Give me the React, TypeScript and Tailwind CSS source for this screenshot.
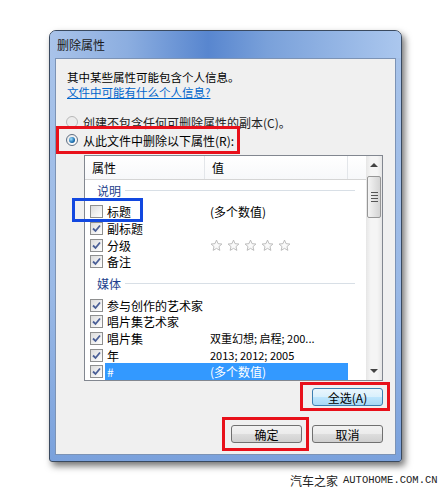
const font = { fontFamily: '"Noto Sans CJK SC", "Noto Sans", sans-serif' };

const Check = ({ on }: { on: boolean }) => (
  <span className="flex h-[13px] w-[13px] shrink-0 items-center justify-center border border-[#8e8f8f] bg-[linear-gradient(135deg,#dcdcdc,#ffffff)]">
    {on && (
      <svg width="9" height="9" viewBox="0 0 9 9">
        <path d="M1 4.5 L3.5 7 L8 1.5" stroke="#4a5f97" strokeWidth="1.8" fill="none" />
      </svg>
    )}
  </span>
);

const Star = () => (
  <svg width="13" height="13" viewBox="0 0 24 24">
    <path
      d="M12 2 L14.9 8.6 L22 9.3 L16.6 14 L18.2 21 L12 17.3 L5.8 21 L7.4 14 L2 9.3 L9.1 8.6 Z"
      fill="#fafafa"
      stroke="#b4b4b4"
      strokeWidth="1.6"
    />
  </svg>
);

const Group = ({ label, className }: { label: string; className: string }) => (
  <div className={`flex h-[22px] items-center pl-[12px] pr-[11px] ${className}`}>
    <span className="text-[#1e3f8c]">{label}</span>
    <span className="ml-[4px] h-px flex-1 bg-[#d8dfe6]" />
  </div>
);

const Row = ({
  name,
  value,
  on = true,
  selected = false,
  stars = false,
  small = false,
}: {
  name: string;
  value?: string;
  on?: boolean;
  selected?: boolean;
  stars?: boolean;
  small?: boolean;
}) => (
  <div className="flex h-[17px] items-center">
    <div className="flex w-[20px] justify-end pr-[2px]">
      <Check on={on} />
    </div>
    <div
      className={`flex h-full w-[243px] items-center ${selected ? "bg-[#3399ff] text-white" : "text-black"}`}
    >
      <span className="w-[105px] pl-[2px]">{name}</span>
      {stars ? (
        <span className="flex gap-[4px]">
          <Star />
          <Star />
          <Star />
          <Star />
          <Star />
        </span>
      ) : (
        <span className={small ? "text-[11px]" : ""}>{value}</span>
      )}
    </div>
  </div>
);

const Radio = ({ on }: { on: boolean }) => (
  <span
    className={`flex h-[12px] w-[12px] items-center justify-center rounded-full border ${on ? "border-[#5e6e82] bg-[linear-gradient(135deg,#e8e8e8,#ffffff)]" : "border-[#b8b8b8] bg-[#ececec]"}`}
  >
    {on && <span className="h-[6px] w-[6px] rounded-full bg-[radial-gradient(circle_at_35%_35%,#9fe0ff,#1c6fb0_60%,#0b3f6e)]" />}
  </span>
);

const Button = ({ label, focus = false }: { label: string; focus?: boolean }) => (
  <div
    className={`flex h-[18px] w-[71px] items-center justify-center rounded-[3px] border text-[12px] text-black ${
      focus
        ? "border-[#3c7fb1] bg-[linear-gradient(180deg,#eaf6fd_0%,#d9f0fc_50%,#bee6fd_51%,#a7d9f5_100%)]"
        : "border-[#707070] bg-[linear-gradient(180deg,#f2f2f2_0%,#ebebeb_50%,#dddddd_51%,#cfcfcf_100%)]"
    }`}
  >
    {label}
  </div>
);

export default function App() {
  return (
    <div className="relative h-[488px] w-[443px] overflow-hidden bg-white text-[12px] leading-[15px]" style={font}>
      <div className="pl-[49px] pt-[30px]">
        {/* window */}
        <div className="flex h-[432px] w-[353px] flex-col rounded-t-[7px] rounded-b-[3px] border border-[#3a4a60] bg-[linear-gradient(180deg,#a9c4ea_0%,#9ab9e6_60%,#7aa1dc_100%)] shadow-[3px_4px_7px_rgba(0,0,0,0.55)]">
          <div className="flex h-[27px] items-center rounded-t-[6px] bg-[linear-gradient(90deg,#a9c3e9_0%,#8caee0_22%,#5886cf_45%,#7aa1da_62%,#abc7ee_100%)] pl-[7px] text-[#1a1a1a]">
            删除属性
          </div>

          {/* client area */}
          <div className="mx-[5px] flex h-[397px] flex-col border border-[#7c93b5] bg-[#f0f0f0] pt-[11px]">
            <div className="h-[15px] pl-[11px] text-[11.5px] leading-[15px] text-black">其中某些属性可能包含个人信息。</div>
            <div className="h-[15px] pl-[11px] text-[11.5px] leading-[15px] text-[#0066cc] underline">文件中可能有什么个人信息?</div>

            <div className="mt-[13px] flex h-[18px] items-center pl-[10px] text-[#222]">
              <Radio on={false} />
              <span className="ml-[5px]">创建不包含任何可删除属性的副本(C)。</span>
            </div>
            <div className="flex h-[18px] items-center pl-[10px] text-black">
              <Radio on />
              <span className="ml-[5px]">从此文件中删除以下属性(R):</span>
            </div>

            {/* list view */}
            <div className="ml-[28px] mt-[6px] flex h-[226px] w-[299px] overflow-hidden border border-[#828790] bg-white">
              <div className="flex w-[281px] flex-col">
                <div className="flex h-[24px] shrink-0 items-center border-b border-[#d5d5d5] bg-[linear-gradient(180deg,#ffffff,#f7f8fa)]">
                  <span className="flex h-full w-[120px] items-center border-r border-[#e3e6ea] pl-[7px]">属性</span>
                  <span className="flex h-full w-[143px] items-center border-r border-[#e3e6ea] pl-[7px]">值</span>
                </div>
                <Group label="说明" className="mb-[2px]" />
                <Row name="标题" value="(多个数值)" on={false} />
                <Row name="副标题" />
                <Row name="分级" stars />
                <Row name="备注" />
                <Group label="媒体" className="mb-[2px] mt-[3px]" />
                <Row name="参与创作的艺术家" />
                <Row name="唱片集艺术家" />
                <Row name="唱片集" value="双重幻想; 启程; 200..." small />
                <Row name="年" value="2013; 2012; 2005" small />
                <Row name="#" value="(多个数值)" selected />
              </div>

              {/* scrollbar */}
              <div className="flex w-[16px] flex-col items-center bg-[linear-gradient(90deg,#e6e6e6,#f5f5f5_30%,#f5f5f5_70%,#e6e6e6)]">
                <div className="flex h-[18px] items-center justify-center">
                  <span className="h-0 w-0 border-x-[4px] border-b-[4px] border-x-transparent border-b-[#444]" />
                </div>
                <div className="mt-[2px] flex h-[42px] w-[14px] flex-col items-center justify-center gap-[2px] rounded-[2px] border border-[#979797] bg-[linear-gradient(90deg,#f4f4f4,#e4e4e4_50%,#d4d4d4)]">
                  <span className="h-px w-[7px] bg-[#555]" />
                  <span className="h-px w-[7px] bg-[#555]" />
                  <span className="h-px w-[7px] bg-[#555]" />
                  <span className="h-px w-[7px] bg-[#555]" />
                </div>
                <div className="flex-1" />
                <div className="flex h-[18px] items-center justify-center">
                  <span className="h-0 w-0 border-x-[4px] border-t-[4px] border-x-transparent border-t-[#444]" />
                </div>
              </div>
            </div>

            <div className="mr-[12px] mt-[7px] flex justify-end">
              <Button label="全选(A)" focus />
            </div>
            <div className="mr-[12px] mt-[19px] flex justify-end gap-[10px]">
              <Button label="确定" />
              <Button label="取消" />
            </div>
          </div>
        </div>
      </div>

      <div className="absolute left-[290px] top-[473px] flex items-center text-[#222]">
        <span className="text-[12px]">汽车之家</span>
        <span className="ml-[5px] text-[10.5px]" style={{ fontFamily: '"Liberation Mono", monospace' }}>
          AUTOHOME.COM.CN
        </span>
      </div>

      {/* annotation boxes */}
      <div className="absolute left-[56px] top-[126px] h-[28px] w-[184px] border-[3px] border-[#e8101a]" />
      <div className="absolute left-[72px] top-[198px] h-[24px] w-[71px] border-[3px] border-[#1248e0]" />
      <div className="absolute left-[300px] top-[382px] h-[29px] w-[90px] border-[3px] border-[#e8101a]" />
      <div className="absolute left-[222px] top-[417px] h-[34px] w-[87px] border-[3px] border-[#e8101a]" />
    </div>
  );
}
